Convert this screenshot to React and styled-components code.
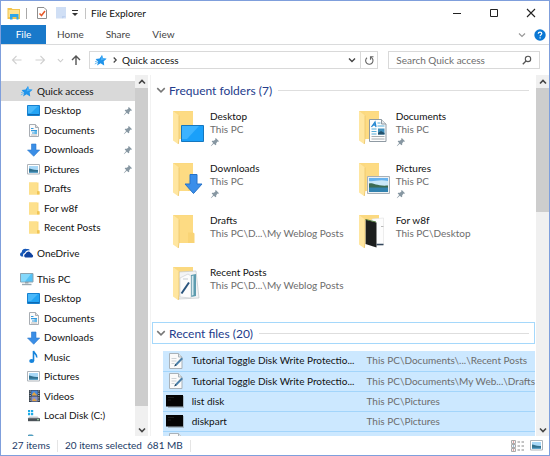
import React from "react";
import styled, { createGlobalStyle, css } from "styled-components";

const Global = createGlobalStyle`
  * { box-sizing: border-box; }
  body { margin: 0; background: #fff; color: #111; font: 10px/13px Lato, "Open Sans", sans-serif; }
  button, input { font: inherit; color: inherit; border: 0; padding: 0; margin: 0; background: none; }
  svg { display: block; flex: none; }
  ul { list-style: none; margin: 0; padding: 0; }
`;

/* ---------- layout ---------- */
const Window = styled.div`
  display: flex;
  flex-direction: column;
  height: 100vh;
  border: 1px solid #7f9fdc;
`;
const TitleBar = styled.header`
  display: flex;
  align-items: center;
  height: 24px;
  padding-left: 6px;
`;
const Divider = styled.span`
  width: 1px;
  height: ${(p) => p.$h || 11}px;
  margin: 0 ${(p) => p.$gap || 5}px;
  background: ${(p) => p.$color || "#a8a8a8"};
`;
const Title = styled.h1`
  margin: 0;
  flex: 1;
  font-size: 10px;
  font-weight: 400;
`;
const QuickButton = styled.button`
  display: grid;
  place-items: center;
  width: ${(p) => (p.$narrow ? 10 : 19)}px;
  height: 18px;
`;
const WindowButton = styled.button`
  display: grid;
  place-items: center;
  width: 37px;
  height: 24px;
`;
const Ribbon = styled.nav`
  display: flex;
  align-items: stretch;
  height: 20px;
  border-bottom: 1px solid #dadbdc;
`;
const Tab = styled.button`
  padding: 0 11px;
  color: #444;
  ${(p) =>
    p.$primary &&
    css`
      width: 45px;
      background: #1979ca;
      color: #fff;
    `}
`;
const RibbonEnd = styled.div`
  display: flex;
  align-items: center;
  gap: 8px;
  margin-left: auto;
  padding-right: 3px;
`;
const PlainButton = styled.button`
  display: grid;
  place-items: center;
`;
const AddressRow = styled.div`
  display: flex;
  align-items: center;
  height: 30px;
  padding: 0 9px 0 8px;
`;
const NavButton = styled.button`
  display: grid;
  place-items: center;
  width: ${(p) => p.$w}px;
  height: 18px;
`;
const AddressBox = styled.div`
  display: flex;
  align-items: center;
  flex: 288;
  min-width: 0;
  height: 18px;
  margin: 0 10px 0 1px;
  border: 1px solid #d9d9d9;
`;
const Crumb = styled.button`
  display: flex;
  align-items: center;
  gap: 3px;
  flex: 1;
  padding-left: 3px;
`;
const BoxButton = styled.button`
  display: grid;
  place-items: center;
  width: 17px;
  height: 16px;
  ${(p) => p.$ruled && "border-left: 1px solid #d9d9d9;"}
`;
const Search = styled.label`
  display: flex;
  align-items: center;
  flex: 136;
  min-width: 0;
  height: 18px;
  padding: 0 7px;
  border: 1px solid #d9d9d9;
`;
const SearchInput = styled.input`
  flex: 1;
  min-width: 0;
  outline: 0;
  &::placeholder { color: #6d6d6d; opacity: 1; }
`;
const Body = styled.div`
  display: flex;
  flex: 1;
  min-height: 0;
`;
const Sidebar = styled.nav`
  width: 134px;
  padding-top: 6px;
  overflow: hidden;
`;
const NavGroup = styled.ul`
  margin-bottom: 6px;
`;
const NavItem = styled.li`
  height: 20px;
  &:nth-child(even) { height: 19px; }
`;
const NavLink = styled.a`
  display: flex;
  align-items: center;
  height: 100%;
  padding: 0 2px 0 ${(p) => (p.$child ? 25 : 18)}px;
  gap: 3px;
  color: inherit;
  text-decoration: none;
  background: ${(p) => (p.$active ? "#d9d9d9" : "none")};
`;
const NavLabel = styled.span`
  flex: 1;
  white-space: nowrap;
`;
const Scroll = styled.div`
  display: flex;
  flex-direction: column;
  width: 13px;
  background: #f0f0f0;
`;
const ScrollButton = styled.button`
  display: grid;
  place-items: center;
  height: 13px;
`;
const Track = styled.div`
  flex: 1;
`;
const Thumb = styled.div`
  height: ${(p) => p.$size}%;
  background: #cdcdcd;
`;
const Content = styled.main`
  display: flex;
  flex-direction: column;
  flex: 1;
  min-width: 0;
  overflow: hidden;
  margin-left: 2px;
  border-left: 1px solid #f2f2f2;
`;
const GroupHeader = styled.button`
  display: flex;
  align-items: center;
  gap: 3px;
  flex: none;
  height: 22px;
  margin: ${(p) => (p.$focus ? "4px 1px 7px 1px" : "4px 1px 9px 1px")};
  padding: 0 5px 0 3px;
  border: 1px solid ${(p) => (p.$focus ? "#a5d8fb" : "transparent")};
  color: #243c8c;
  font-size: 12px;
  white-space: nowrap;
`;
const Rule = styled.span`
  flex: 1;
  height: 1px;
  margin-left: 3px;
  background: #dedede;
`;
const Tiles = styled.ul`
  display: grid;
  grid-template-columns: 51% 49%;
  padding-left: 21px;
`;
const Tile = styled.button`
  display: flex;
  gap: 4px;
  width: 100%;
  height: 52px;
  text-align: left;
`;
const TileText = styled.span`
  display: flex;
  flex-direction: column;
  min-width: 0;
  white-space: nowrap;
`;
const Muted = styled.span`
  color: #6d6d6d;
`;
const PinSlot = styled.span`
  padding-top: 1px;
`;
const Files = styled.table`
  width: auto;
  margin: 0 1px 0 12px;
  border-collapse: collapse;
  table-layout: fixed;
  color: #111;
`;
const FileRow = styled.tr`
  height: 20px;
  background: #cce8ff;
  border-bottom: 1px solid #a3d5fb;
`;
const IconCell = styled.td`
  width: 30px;
  padding: 0 0 0 3px;
`;
const NameCell = styled.td`
  width: 47%;
  padding: 0;
  white-space: nowrap;
`;
const PathCell = styled.td`
  padding: 0;
  color: #6d6d6d;
  white-space: nowrap;
`;
const StatusBar = styled.footer`
  display: flex;
  align-items: center;
  height: 19px;
  padding: 0 5px 0 11px;
  color: #223a66;
`;
const ViewButtons = styled.div`
  display: flex;
  gap: 4px;
  margin-left: auto;
`;

/* ---------- icons ---------- */
const Chevron = ({ dir = "down", color = "#777", w = 1.2, size = 8 }) => {
  const d = { down: "M1 2.5 4 5.5 7 2.5", up: "M1 5.5 4 2.5 7 5.5", right: "M2.7 1.5 5.2 4 2.7 6.5" }[dir];
  return (
    <svg width={size} height={size} viewBox="0 0 8 8">
      <path d={d} fill="none" stroke={color} strokeWidth={w} />
    </svg>
  );
};
const Arrow = ({ dir, color, w = 1.1 }) => {
  const d = { left: "M10.5 6H1.5M5.5 2 1.5 6l4 4", right: "M1.5 6h9M6.5 2l4 4-4 4", up: "M6 11V2M2 6l4-4 4 4" }[dir];
  return (
    <svg width="12" height="12" viewBox="0 0 12 12">
      <path d={d} fill="none" stroke={color} strokeWidth={w} />
    </svg>
  );
};
const Star = () => (
  <svg width="15" height="13" viewBox="-1 0 15 13">
    <path d="M8 1 8.900 4.300 12.600 4.700 9.700 7.200 10.200 11.600 6.600 9.200 3 11.600 4.200 7.900 1.600 5 5.600 4.500z" fill="#1f93ea" />
    <path d="M.8 10 4 8.200M1 7.800l2-.8" stroke="#6fbdf2" strokeWidth="1" />
    <path d="M8 1 8.900 4.300 12.600 4.700 6.600 6.500z" fill="#4bb1f8" />
  </svg>
);
const Screen = () => (
  <svg width="15" height="13" viewBox="0 0 15 13">
    <path d="M1.5 1.5h12v10h-12z" fill="#23a4f4" stroke="#1680cf" />
    <path d="M2 2h10L5 9H2z" fill="#49b8fa" />
    <path d="M2 10.5h11" stroke="#0d6ab4" />
  </svg>
);
const Doc = () => (
  <svg width="15" height="14" viewBox="0 0 15 14">
    <path d="M3.5 1.5h6l3 3v9h-9z" fill="#fafafa" stroke="#a8adb3" />
    <path d="M9.5 1.5v3h3" fill="#ddd" stroke="#a8adb3" />
    <path d="M5 5.5h2.5M5 7.7h6M6 10h5" stroke="#3299dd" strokeWidth="1.2" />
    <path d="M8.5 8h2.5v3H8.500z" fill="#61b8e8" />
    <path d="M5 12h6" stroke="#bbb" />
  </svg>
);
const Down = () => (
  <svg width="15" height="14" viewBox="0 0 15 14">
    <path d="M5.500 1h4.500v6h3.700L7.700 13.300 1.500 7h4z" fill="#3a8ee6" stroke="#2c78cc" strokeWidth=".6" />
  </svg>
);
const Pic = () => (
  <svg width="15" height="13" viewBox="0 0 15 13">
    <path d="M1.5 1.500h12v9.500h-12z" fill="#fff" stroke="#aeb4ba" />
    <path d="M3 3h9v6.500H3z" fill="#a8d8f7" />
    <path d="M3 5.500c2 0 4 1.800 9 1.500v2.500H3z" fill="#31708d" />
    <path d="M3 8.700h9v1H3z" fill="#4c9bc9" />
  </svg>
);
const Folder = () => (
  <svg width="15" height="15" viewBox="0 0 15 15">
    <path d="M3 1.500h9.500V10l1 .8V13.500H3z" fill="#fbdc83" />
    <path d="M3 1.500h8v12H3z" fill="#fde08c" />
    <path d="M11 10.200h2.500v3.300H11z" fill="#f0c455" />
  </svg>
);
const Cloud = () => (
  <svg width="15" height="12" viewBox="0 0 15 12">
    <path d="M2.500 9.500a2.200 2.200 0 0 1 .2-4.200 3.500 3.500 0 0 1 5-3.200A3.200 3.200 0 0 1 11 3.200C7.500 2.800 6 5 6 6 3.500 6.300 3.800 9 4.500 9.500z" fill="#1658b8" />
    <path d="M6.500 10.500A2 2 0 0 1 6.600 6.700 2.800 2.800 0 0 1 11.500 5.700 2.200 2.200 0 0 1 13 7.500a1.600 1.600 0 0 1 .2 3z" fill="#0f429f" />
  </svg>
);
const Monitor = () => (
  <svg width="15" height="14" viewBox="0 0 15 14">
    <path d="M1.500 1.500h12.500v8.500H1.500z" fill="#53c2f6" stroke="#8ba3b0" />
    <path d="M2 2h10L6 9.500H2z" fill="#84d8fb" />
    <path d="M6 10h3.500v1.500H6z" fill="#94a2ab" />
    <path d="M3 12.500h9.500" stroke="#9aa8b1" strokeWidth="1.400" />
  </svg>
);
const Note = () => (
  <svg width="15" height="14" viewBox="0 0 15 14">
    <path d="M7.500 11V1c.5 2.800 3.800 3 3.200 6.500" fill="none" stroke="#1684dc" strokeWidth="1.600" />
    <ellipse cx="5.700" cy="11" rx="2.500" ry="2" fill="#1684dc" />
  </svg>
);
const Film = () => (
  <svg width="15" height="14" viewBox="0 0 15 14">
    <path d="M3 1h11v12H3z" fill="#333d48" />
    <path d="M5.300 1.500h6.400v5H5.300z" fill="#4b88d9" />
    <path d="M5.300 7.500h6.400v5H5.300z" fill="#8a93c9" />
    <path d="M6 5.500 8 3l3.500 3.500H6zM6 12l2-3 3 3z" fill="#e2a23f" />
    <path d="M4.200 1.500v11M12.800 1.500v11" stroke="#dfe4e8" strokeWidth="1" strokeDasharray="1 1.300" />
  </svg>
);
const Disk = () => (
  <svg width="15" height="14" viewBox="0 0 15 14">
    <path d="M2 1h2.200v2.200H2zM5 1h2.200v2.200H5zM2 4h2.200v2.200H2zM5 4h2.200v2.200H5z" fill="#1fabe6" />
    <path d="M3.500 7.500h8l2 2h-12z" fill="#c3c8cc" />
    <path d="M2 9.200h12v3H2z" fill="#4b5258" />
    <path d="M11 10.700h2" stroke="#a1e1a1" />
  </svg>
);
const Network = () => (
  <svg width="15" height="14" viewBox="0 0 15 14">
    <path d="M2.500 7h4l1 1.500h5V13h-10z" fill="#48b1dc" stroke="#5293b0" />
  </svg>
);
const Pin = () => (
  <svg width="10" height="10" viewBox="0 0 10 10">
    <path d="M5.800 1 9 4.200 8.200 4.700 7.600 4.600 6.200 6.200 6.200 7.800 5.500 8.300 3.800 6.700 1 9.200.8 9 3.200 6.100 1.700 4.500 2.200 3.800 3.900 3.800 5.400 2.400 5.300 1.600z" fill="#8797a2" />
  </svg>
);
const ExplorerIcon = () => (
  <svg width="14" height="13" viewBox="0 0 14 13">
    <path d="M.5 1h4l1 1H13v10H.5z" fill="#f2c44f" />
    <path d="M1.500 3h10.500v7H1.500z" fill="#ffe391" />
    <path d="M3 7h8.500v5.500H9.500V10h-4v2.500H3z" fill="#2fa6e8" />
  </svg>
);
const CheckDoc = () => (
  <svg width="12" height="14" viewBox="0 0 12 14">
    <path d="M1.500 1.500h6.500l2.500 2.500v8.500h-9z" fill="#fff" stroke="#8d8d8d" />
    <path d="M3.500 7.500 5.500 9.500 9 5" fill="none" stroke="#e75a2b" strokeWidth="1.500" />
  </svg>
);
const Sheet = () => (
  <svg width="12" height="14" viewBox="0 0 12 14">
    <path d="M1 1h10v11.500H1z" fill="#d0dff5" />
    <path d="M7 12.500V10h4" fill="#bdd0ee" />
  </svg>
);
const Customize = () => (
  <svg width="8" height="8" viewBox="0 0 8 8">
    <path d="M1 1.500h6" stroke="#333" />
    <path d="M1 4h6L4 7z" fill="#333" />
  </svg>
);
const Help = () => (
  <svg width="12" height="12" viewBox="0 0 12 12">
    <circle cx="6" cy="6" r="5.700" fill="#0b78d4" />
    <path d="M4.200 4.700C4.300 2.600 7.800 2.700 7.800 4.600 7.800 5.800 6.100 5.800 6.100 7.300M6.100 8.300v1.200" fill="none" stroke="#fff" strokeWidth="1.200" />
  </svg>
);
const Magnifier = () => (
  <svg width="10" height="10" viewBox="0 0 10 10">
    <circle cx="6" cy="3.900" r="2.700" fill="none" stroke="#555" strokeWidth="1.100" />
    <path d="M4 6 .8 9.200" stroke="#555" strokeWidth="1.300" />
  </svg>
);
const Refresh = () => (
  <svg width="11" height="11" viewBox="0 0 11 11">
    <path d="M6.800 2.200A3.700 3.700 0 1 1 3 2.700" fill="none" stroke="#666" strokeWidth="1.100" />
    <path d="M6.500 4.700V1.700h3" fill="none" stroke="#666" strokeWidth="1.100" />
  </svg>
);

const overlays = {
  desktop: (
    <>
      <path d="M9.500 15.500h22v16h-22z" fill="#1aa0fa" stroke="#1577bf" />
      <path d="M10 16h17L15 29h-5z" fill="#3db3ff" />
    </>
  ),
  documents: (
    <>
      <path d="M11.500 9.500h12l4.500 4.500v17.500h-16.500z" fill="#fdfdfd" stroke="#8f9aa3" />
      <path d="M23.500 9.500V14H28" fill="#e5e8ea" stroke="#8f9aa3" />
      <path d="m13.500 17 3.500-5 1 5m-3-2h2.500" fill="none" stroke="#2186d1" strokeWidth="1.300" />
      <path d="M19.500 13h3M19.500 16h7M13.500 19h5M13.500 21.500h5M13.500 24h5" stroke="#55acd9" />
      <path d="M20 18.500h6.500v6H20z" fill="#3e8fbd" />
      <path d="m20 23 3-2 3.500 2v1.500H20z" fill="#24516c" />
      <path d="M13.500 26.500h13M13.500 29h13" stroke="#a8adb1" />
    </>
  ),
  downloads: <path d="M18 12.500h7V22h5L21.500 31.500 13 22H18z" fill="#3a8eea" stroke="#2673c9" />,
  pictures: (
    <>
      <path d="M9.500 14.500h22v17h-22z" fill="#eef1f3" stroke="#a7b0b7" />
      <path d="M11 16h19v14H11z" fill="#68b3ee" />
      <path d="M11 19c5 1 10-2 19 0v6H11z" fill="#c9e7f8" />
      <path d="M11 21.500c4-1 8 3 19 2v2.500H11z" fill="#3b6b53" />
      <path d="M11 25.500h19V30H11z" fill="#3182af" />
    </>
  ),
  dark: (
    <>
      <path d="M14 5 25.500 4v27L14 32z" fill="#fdfdfd" stroke="#e0e0e0" strokeWidth=".6" />
      <path d="M7.500 5.500 18.500 8.500v25L7.500 30z" fill="#1c1e1d" />
      <path d="M7.500 5.500 18 8" stroke="#4f7b3a" />
      <path d="M23 12.500h2.500" stroke="#bbb" />
      <path d="M18.500 30.500h7" stroke="#33475c" strokeWidth="1.500" />
    </>
  ),
  posts: (
    <>
      <path d="M7 6l17-1 3 27-20 1z" fill="#f3f4f5" stroke="#c3c8cb" strokeWidth=".7" />
      <path d="M19 9l5-1v22l-5 1z" fill="#5d9caf" />
      <path d="M20 10l1.500-.5V29l-1.500.5z" fill="#d6e9ef" />
      <path d="M8 12l8-4 3 2v22l-11-1z" fill="#fcfcfc" stroke="#cbd0d3" strokeWidth=".7" />
      <path d="M9.500 27.500 17 16.500" stroke="#29547d" strokeWidth="2" />
      <path d="M11 13h5" stroke="#c4cbd0" />
    </>
  ),
};
const BigFolder = ({ kind }) => {
  const filled = kind === "posts" || kind === "dark";
  return (
    <svg width="34" height="36" viewBox="0 0 34 36">
      {filled ? (
        <path d="M1 1h20v5H1z" fill="#fbd980" />
      ) : (
        <>
          <path d="M1 1h20v28H1z" fill="#fbd980" />
          <path d="M7 2h14v27H7z" fill="#fddb83" />
          <path d="M16 18.500h5l1.500 1V29H16z" fill="#f9d476" />
        </>
      )}
      {filled && overlays[kind]}
      <path d="M1 1 7 5.500v28L6 34 1 30.500z" fill="#ffe6a0" />
      <path d="M7 5.500v23l-.7 5.500" fill="none" stroke="#e8c266" strokeWidth=".7" />
      {!filled && overlays[kind]}
    </svg>
  );
};
const NoteFile = () => (
  <svg width="20" height="18" viewBox="0 0 20 18">
    <path d="M3.500 1.500h9l3.500 3.500v11.500h-12.500z" fill="#fafafa" stroke="#a9b2b9" />
    <path d="M12.500 1.500V5H16" fill="#e1e5e8" stroke="#a9b2b9" />
    <path d="M5.500 6.500h5M5.500 9h5M5.500 11.500h3" stroke="#cdd2d6" />
    <path d="M8.500 14.300 9.300 12 15.500 5.500 17 6.900 10.700 13.400z" fill="#4c80a9" />
    <path d="M8.300 14.500l2.200-1.200-1.300-1.200z" fill="#27455f" />
  </svg>
);
const ConsoleFile = () => (
  <svg width="20" height="18" viewBox="0 0 20 18">
    <path d="M2 4h16v12H2z" fill="#a7bac8" />
    <path d="M0 3h17v11.500H0z" fill="#050505" />
    <path d="M2 5.500h6M2 8h3" stroke="#1c1c1c" />
  </svg>
);
const DetailsView = () => (
  <svg width="14" height="12" viewBox="0 0 14 12">
    <path d="M.5.500h4v3h-4zM.5 4.500h4v3h-4zM.5 8.500h4v3h-4z" fill="#f5f5f5" stroke="#aaa" />
    <path d="M2 2h1M2 10h1" stroke="#cd4f4f" />
    <path d="M2 6h1" stroke="#4085bd" />
    <path d="M6.500 2H9M10.500 2H13M6.500 6H9M10.500 6H13M6.500 10H9M10.500 10H13" stroke="#888" />
  </svg>
);

/* ---------- data ---------- */
const quick = [
  ["Desktop", Screen, true],
  ["Documents", Doc, true],
  ["Downloads", Down, true],
  ["Pictures", Pic, true],
  ["Drafts", Folder],
  ["For w8f", Folder],
  ["Recent Posts", Folder],
];
const thisPc = [
  ["Desktop", Screen],
  ["Documents", Doc],
  ["Downloads", Down],
  ["Music", Note],
  ["Pictures", Pic],
  ["Videos", Film],
  ["Local Disk (C:)", Disk],
  ["", Network],
];
const folders = [
  ["Desktop", "This PC", "desktop", true],
  ["Documents", "This PC", "documents", true],
  ["Downloads", "This PC", "downloads", true],
  ["Pictures", "This PC", "pictures", true],
  ["Drafts", "This PC\\D...\\My Weblog Posts", "plain"],
  ["For w8f", "This PC\\Desktop", "dark"],
  ["Recent Posts", "This PC\\D...\\My Weblog Posts", "posts"],
];
const files = [
  ["Tutorial Toggle Disk Write Protectio...", "This PC\\Documents\\...\\Recent Posts", NoteFile],
  ["Tutorial Toggle Disk Write Protectio...", "This PC\\Documents\\My Web...\\Drafts", NoteFile],
  ["list disk", "This PC\\Pictures", ConsoleFile],
  ["diskpart", "This PC\\Pictures", ConsoleFile],
  ["", "", NoteFile],
];

const NavEntry = ({ label, Icon, pinned, child, active }) => (
  <NavItem>
    <NavLink href="#" $child={child} $active={active} aria-label={label || "Network"}>
      <Icon />
      <NavLabel>{label}</NavLabel>
      {pinned && <Pin />}
    </NavLink>
  </NavItem>
);
const ScrollBar = ({ size }) => (
  <Scroll>
    <ScrollButton aria-label="Scroll up"><Chevron dir="up" color="#444" w={1.6} /></ScrollButton>
    <Track><Thumb $size={size} /></Track>
    <ScrollButton aria-label="Scroll down"><Chevron color="#444" w={1.6} /></ScrollButton>
  </Scroll>
);

export default function App() {
  return (
    <>
      <Global />
      <Window>
        <TitleBar>
          <ExplorerIcon />
          <Divider />
          <QuickButton aria-label="Properties"><CheckDoc /></QuickButton>
          <QuickButton aria-label="New folder"><Sheet /></QuickButton>
          <QuickButton $narrow aria-label="Customize toolbar"><Customize /></QuickButton>
          <Divider $color="#c4c4c4" />
          <Title>File Explorer</Title>
          <WindowButton aria-label="Minimize">
            <svg width="10" height="10"><path d="M1 5.500h8" stroke="#222" /></svg>
          </WindowButton>
          <WindowButton aria-label="Maximize">
            <svg width="10" height="10"><path d="M1.500 1.500h7v7h-7z" fill="none" stroke="#222" /></svg>
          </WindowButton>
          <WindowButton aria-label="Close">
            <svg width="10" height="10"><path d="M1 1l8 8M9 1 1 9" stroke="#222" strokeWidth="1.100" /></svg>
          </WindowButton>
        </TitleBar>
        <Ribbon>
          <Tab $primary>File</Tab>
          <Tab>Home</Tab>
          <Tab>Share</Tab>
          <Tab>View</Tab>
          <RibbonEnd>
            <PlainButton aria-label="Expand ribbon"><Chevron color="#999" /></PlainButton>
            <PlainButton aria-label="Help"><Help /></PlainButton>
          </RibbonEnd>
        </Ribbon>
        <AddressRow>
          <NavButton $w={15} aria-label="Back"><Arrow dir="left" color="#d0d0d0" /></NavButton>
          <NavButton $w={32} aria-label="Forward"><Arrow dir="right" color="#d0d0d0" /></NavButton>
          <NavButton $w={8} aria-label="Recent locations"><Chevron color="#ccc" size={7} /></NavButton>
          <NavButton $w={24} aria-label="Up"><Arrow dir="up" color="#555" w={1.4} /></NavButton>
          <AddressBox>
            <Crumb><Star /><Chevron dir="right" color="#444" />Quick access</Crumb>
            <BoxButton aria-label="Previous locations"><Chevron color="#444" w={1.4} /></BoxButton>
            <BoxButton $ruled aria-label="Refresh"><Refresh /></BoxButton>
          </AddressBox>
          <Search>
            <SearchInput aria-label="Search Quick access" placeholder="Search Quick access" />
            <Magnifier />
          </Search>
        </AddressRow>
        <Body>
          <Sidebar>
            <NavGroup>
              <NavEntry label="Quick access" Icon={Star} active />
              {quick.map(([label, Icon, pinned]) => (
                <NavEntry key={label} label={label} Icon={Icon} pinned={pinned} child />
              ))}
            </NavGroup>
            <NavGroup><NavEntry label="OneDrive" Icon={Cloud} /></NavGroup>
            <NavGroup>
              <NavEntry label="This PC" Icon={Monitor} />
              {thisPc.map(([label, Icon]) => (
                <NavEntry key={label} label={label} Icon={Icon} child />
              ))}
            </NavGroup>
          </Sidebar>
          <ScrollBar size={95} />
          <Content>
            <GroupHeader><Chevron size={10} />Frequent folders (7)<Rule /></GroupHeader>
            <Tiles>
              {folders.map(([name, place, kind, pinned]) => (
                <li key={name}>
                  <Tile>
                    <BigFolder kind={kind} />
                    <TileText>
                      <span>{name}</span>
                      <Muted>{place}</Muted>
                      {pinned && <PinSlot><Pin /></PinSlot>}
                    </TileText>
                  </Tile>
                </li>
              ))}
            </Tiles>
            <GroupHeader $focus><Chevron size={10} />Recent files (20)<Rule /></GroupHeader>
            <Files>
              <tbody>
                {files.map(([name, path, Icon], i) => (
                  <FileRow key={i}>
                    <IconCell><Icon /></IconCell>
                    <NameCell>{name}</NameCell>
                    <PathCell>{path}</PathCell>
                  </FileRow>
                ))}
              </tbody>
            </Files>
          </Content>
          <ScrollBar size={37} />
        </Body>
        <StatusBar>
          <span>27 items</span>
          <Divider $h={12} $gap={7} $color="#e5e5e5" />
          <span>20 items selected&nbsp; 681 MB</span>
          <Divider $h={12} $gap={7} $color="#e5e5e5" />
          <ViewButtons>
            <PlainButton aria-label="Details view"><DetailsView /></PlainButton>
            <PlainButton aria-label="Large icons view"><Pic /></PlainButton>
          </ViewButtons>
        </StatusBar>
      </Window>
    </>
  );
}
